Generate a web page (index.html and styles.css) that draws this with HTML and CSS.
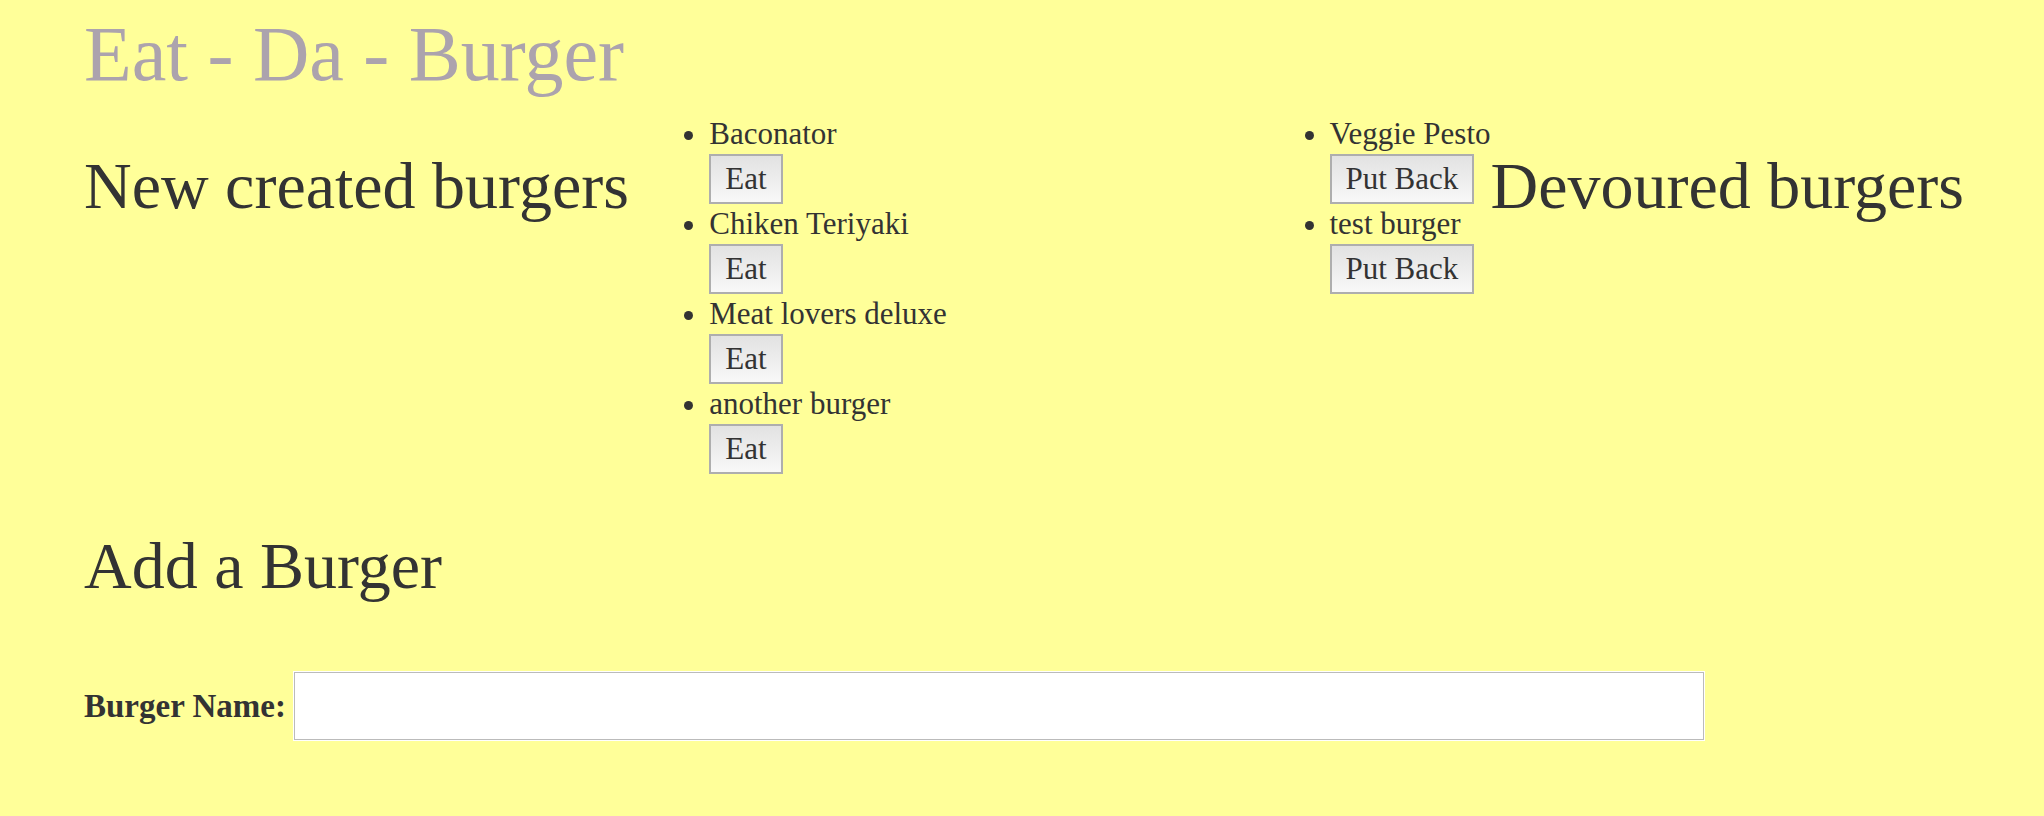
FILE: index.html
```
<!DOCTYPE html>
<html lang="en">
<head>
<meta charset="utf-8">
<title>Eat - Da - Burger</title>
<link rel="stylesheet" href="styles.css">
</head>
<body>
<main class="page">
  <h1 class="title">Eat - Da - Burger</h1>
  <div class="burgers">
    <h2 class="heading">New created burgers</h2>
    <ul class="list">
      <li class="item">Baconator<form class="action"><button class="btn" type="submit">Eat</button></form></li>
      <li class="item">Chiken Teriyaki<form class="action"><button class="btn" type="submit">Eat</button></form></li>
      <li class="item">Meat lovers deluxe<form class="action"><button class="btn" type="submit">Eat</button></form></li>
      <li class="item">another burger<form class="action"><button class="btn" type="submit">Eat</button></form></li>
    </ul>
    <ul class="list">
      <li class="item">Veggie Pesto<form class="action"><button class="btn" type="submit">Put Back</button></form></li>
      <li class="item">test burger<form class="action"><button class="btn" type="submit">Put Back</button></form></li>
    </ul>
    <h2 class="heading">Devoured burgers</h2>
  </div>
  <h2 class="heading">Add a Burger</h2>
  <form class="add">
    <label class="label" for="name">Burger Name:</label>
    <input class="field" type="text" id="name" name="name">
  </form>
</main>
</body>
</html>
```
FILE: styles.css
```
* {
  box-sizing: border-box;
}

body {
  margin: 0;
  background: #ffff99;
  color: #333;
  font: 31px/40px Georgia, "Liberation Serif", serif;
}

.page {
  padding: 8px 80px 8px 84px;
}

.title {
  margin: 0;
  color: #aca3ad;
  font-size: 78px;
  font-weight: normal;
  line-height: 92px;
}

.burgers {
  display: grid;
  grid-template-columns: 627fr 622fr 157fr 474fr;
  margin: 14px 0 56px;
}

.heading {
  margin: 36px 0;
  font-size: 66px;
  font-weight: normal;
  line-height: 72px;
  white-space: nowrap;
}

.list {
  margin: 0;
  padding: 0;
}

.item {
  white-space: nowrap;
}

.action {
  display: flex;
}

.btn {
  height: 50px;
  padding: 0 14px;
  border: 2px solid #aeaeae;
  background: linear-gradient(#e2e2e2, #f8f8f8);
  color: inherit;
  font: inherit;
  line-height: 44px;
}

.add {
  display: flex;
  align-items: center;
  gap: 8px;
  margin-top: 70px;
}

.label {
  font-size: 33px;
  font-weight: bold;
}

.field {
  width: 75%;
  height: 68px;
  padding: 0 16px;
  border: 1px solid #bbb;
  outline: 1px solid #fff;
  background: #fff;
  color: inherit;
  font: inherit;
}
```
